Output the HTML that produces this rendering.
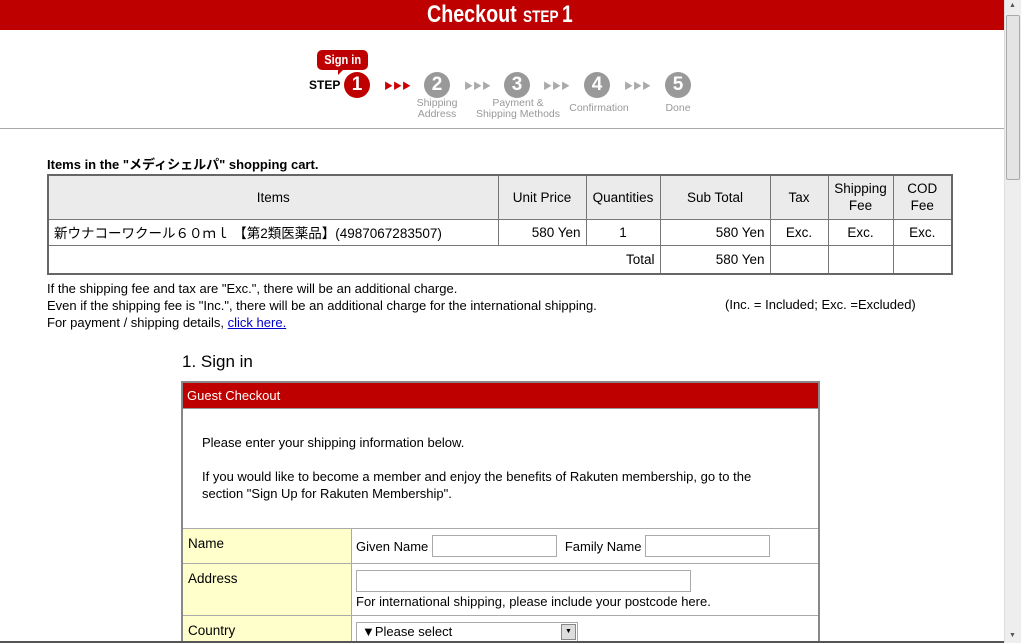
<!DOCTYPE html>
<html><head><meta charset="utf-8">
<style>
*{margin:0;padding:0;box-sizing:border-box}
html,body{width:1021px;height:643px;overflow:hidden}
body{background:#fff;font-family:"Liberation Sans","Noto Sans CJK JP",sans-serif;font-size:13px;color:#000;position:relative}
.a{position:absolute}
.hdr{left:0;top:0;width:1004px;height:30px;background:#bf0000;color:#fff;font-weight:bold}
.circ{width:26px;height:26px;border-radius:50%;color:#fff;font-weight:bold;font-size:19px;text-align:center;line-height:26px}
.g{background:#999}
.lbl{color:#999;font-size:10.5px;text-align:center;line-height:11px}
.arr{font-size:9px;color:#aaa}
table{border-collapse:collapse}
.cart{left:47px;top:174px;width:906px;border:2px solid #666}
.cart td{border:1px solid #777;padding:0 5px;font-size:13.5px}
.cart .h td{background:#ebebeb;text-align:center;height:44px;line-height:17px}
.form{left:181px;top:381px;width:639px;border:2px solid #888;border-bottom:none;height:262px;overflow:hidden}
.inp{border:1px solid #aaa;background:#fff;height:22px}
.sb{left:1004px;top:0;width:17px;height:643px;background:#eee;border-left:1px solid #ddd}
.lab{width:169px;background:#ffffcc;border-right:1px solid #aaa;padding:7px 5px;font-size:13.5px}
</style></head><body>
<div class="a hdr"><div style="position:absolute;left:427px;top:0;font-size:24px;line-height:30px;transform:scaleX(0.82);transform-origin:left;white-space:nowrap">Checkout</div><div style="position:absolute;left:523px;top:7px;font-size:17px;transform:scaleX(0.8);transform-origin:left">STEP</div><div style="position:absolute;left:562px;top:0;font-size:24px;line-height:30px;transform:scaleX(0.8);transform-origin:left">1</div></div>

<div class="a" style="left:317px;top:50px;width:51px;height:20px;background:#bf0000;border-radius:5px;color:#fff;font-weight:bold;font-size:13px;text-align:center;line-height:19px"><span style="display:inline-block;transform:scaleX(0.85)">Sign in</span></div>
<div class="a" style="left:338px;top:69px;width:0;height:0;border-left:6px solid #bf0000;border-bottom:6px solid transparent"></div>
<div class="a" style="left:309px;top:78px;font-weight:bold;font-size:12px">STEP</div>
<div class="a circ" style="left:344px;top:72px;background:#bf0000">1</div>
<div class="a arr" style="left:384px;top:79px;color:#c00">▶▶▶</div>
<div class="a circ g" style="left:424px;top:72px">2</div>
<div class="a lbl" style="left:407px;top:98px;width:60px">Shipping<br>Address</div>
<div class="a arr" style="left:464px;top:79px">▶▶▶</div>
<div class="a circ g" style="left:504px;top:72px">3</div>
<div class="a lbl" style="left:472px;top:98px;width:92px">Payment &amp;<br>Shipping Methods</div>
<div class="a arr" style="left:543px;top:79px">▶▶▶</div>
<div class="a circ g" style="left:584px;top:72px">4</div>
<div class="a lbl" style="left:564px;top:103px;width:70px">Confirmation</div>
<div class="a arr" style="left:624px;top:79px">▶▶▶</div>
<div class="a circ g" style="left:665px;top:72px">5</div>
<div class="a lbl" style="left:658px;top:103px;width:40px">Done</div>
<div class="a" style="left:0;top:128px;width:1004px;height:1px;background:#aaa"></div>

<div class="a" style="left:47px;top:157px;font-weight:bold;font-size:13px;line-height:16px">Items in the "メディシェルパ" shopping cart.</div>
<table class="a cart">
<tr class="h"><td style="width:450px">Items</td><td style="width:88px">Unit Price</td><td style="width:74px;padding:0 2px">Quantities</td><td style="width:110px">Sub Total</td><td style="width:58px">Tax</td><td style="width:65px;padding:0 2px">Shipping<br>Fee</td><td>COD<br>Fee</td></tr>
<tr style="height:26px"><td>新ウナコーワクール６０ｍｌ 【第2類医薬品】(4987067283507)</td><td style="text-align:right">580 Yen</td><td style="text-align:center">1</td><td style="text-align:right">580 Yen</td><td style="text-align:center">Exc.</td><td style="text-align:center">Exc.</td><td style="text-align:center">Exc.</td></tr>
<tr style="height:29px"><td colspan="3" style="text-align:right">Total</td><td style="text-align:right">580 Yen</td><td></td><td></td><td></td></tr>
</table>
<div class="a" style="left:47px;top:280px;line-height:17px;font-size:13px">If the shipping fee and tax are "Exc.", there will be an additional charge.<br>Even if the shipping fee is "Inc.", there will be an additional charge for the international shipping.<br>For payment / shipping details, <a href="#" style="color:#00c">click here.</a></div>
<div class="a" style="left:725px;top:297px;font-size:13px">(Inc. = Included; Exc. =Excluded)</div>

<div class="a" style="left:182px;top:352px;font-size:17px">1. Sign in</div>
<div class="a form">
 <div style="height:26px;background:#bf0000;color:#fff;padding-left:4px;line-height:25px;font-size:13px;border-bottom:1px solid #999">Guest Checkout</div>
 <div style="height:119px;padding:25px 0 0 19px;line-height:17px;font-size:13px">Please enter your shipping information below.<br><br>If you would like to become a member and enjoy the benefits of Rakuten membership, go to the<br>section "Sign Up for Rakuten Membership".</div>
 <div style="height:35px;border-top:1px solid #aaa;display:flex"><div class="lab">Name</div><div style="padding:6px 4px;display:flex;align-items:center;gap:4px">Given Name <span class="inp" style="width:125px;display:inline-block"></span>&nbsp;Family Name <span class="inp" style="width:125px;display:inline-block"></span></div></div>
 <div style="height:52px;border-top:1px solid #aaa;display:flex"><div class="lab">Address</div><div style="padding:6px 4px"><div class="inp" style="width:335px"></div><div style="margin-top:2px">For international shipping, please include your postcode here.</div></div></div>
 <div style="height:40px;border-top:1px solid #aaa;display:flex"><div class="lab">Country</div><div style="padding:6px 4px"><div class="inp" style="width:222px;height:20px;position:relative;padding-left:5px;line-height:18px">▼Please select<span style="position:absolute;right:1px;top:1px;width:15px;height:16px;background:#ddd;border:1px solid #888;font-size:7px;text-align:center;line-height:14px">▼</span></div></div></div>
</div>
<div class="a" style="left:0;top:641px;width:1004px;height:2px;background:#555"></div>

<div class="a sb"><div style="position:absolute;left:1px;top:15px;width:14px;height:165px;background:#e4e4e4;border:1px solid #aaa;border-radius:2px"></div><div style="position:absolute;left:4px;top:2px;font-size:7px;color:#555">▲</div><div style="position:absolute;left:4px;top:632px;font-size:7px;color:#555">▼</div></div>
</body></html>
